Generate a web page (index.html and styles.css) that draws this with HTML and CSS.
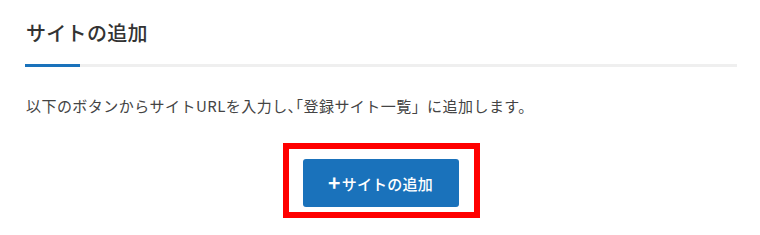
FILE: index.html
```html
<!DOCTYPE html>
<html lang="ja">
<head>
<meta charset="utf-8">
<link rel="stylesheet" href="styles.css">
</head>
<body>
<section class="section">
  <h2 class="title">サイトの追加</h2>
  <div class="rule"><span class="rule-accent"></span><span class="rule-rest"></span></div>
  <p class="desc">以下のボタンからサイトURLを入力し<span class="half">、</span>「登録サイト一覧」に追加します。</p>
  <div class="actions">
    <div class="highlight">
      <button class="btn" type="button"><span class="plus">+</span>サイトの追加</button>
    </div>
  </div>
</section>
</body>
</html>
```
FILE: styles.css
```css
html, body {
  margin: 0;
  padding: 0;
  background: #fff;
}
body {
  font-family: "Noto Sans CJK JP", "Noto Sans", sans-serif;
}
.section {
  width: 712px;
  margin-left: 25px;
  padding-top: 18px;
}
.title {
  margin: 0;
  padding: 0 0 16px 1px;
  font-size: 20px;
  line-height: 30px;
  font-weight: 500;
  letter-spacing: 0.3px;
  color: #333;
}
.rule {
  display: flex;
  height: 3px;
}
.rule-accent {
  width: 55px;
  background: #1a72bb;
}
.rule-rest {
  flex: 1;
  background: #efefef;
}
.desc {
  margin: 27px 0 0 1px;
  font-size: 15px;
  line-height: 24px;
  letter-spacing: 0.45px;
  color: #444;
}
.half {
  font-feature-settings: "halt";
}
.actions {
  display: flex;
  justify-content: center;
  margin-top: 25px;
}
.highlight {
  display: flex;
  border: 6px solid #ff0000;
  padding: 10px 15px 5px 14px;
}
.btn {
  width: 156px;
  height: 48px;
  border: 0;
  border-radius: 3px;
  background: #1a72bb;
  color: #fff;
  font-family: "Noto Sans CJK JP", "Noto Sans", sans-serif;
  font-size: 15px;
  font-weight: 500;
  letter-spacing: 0.2px;
  display: flex;
  align-items: center;
  justify-content: center;
  padding: 0;
}
.plus {
  font-size: 21px;
  font-weight: 700;
  line-height: 1;
  margin-right: 1px;
  position: relative;
  top: -1px;
}
```
